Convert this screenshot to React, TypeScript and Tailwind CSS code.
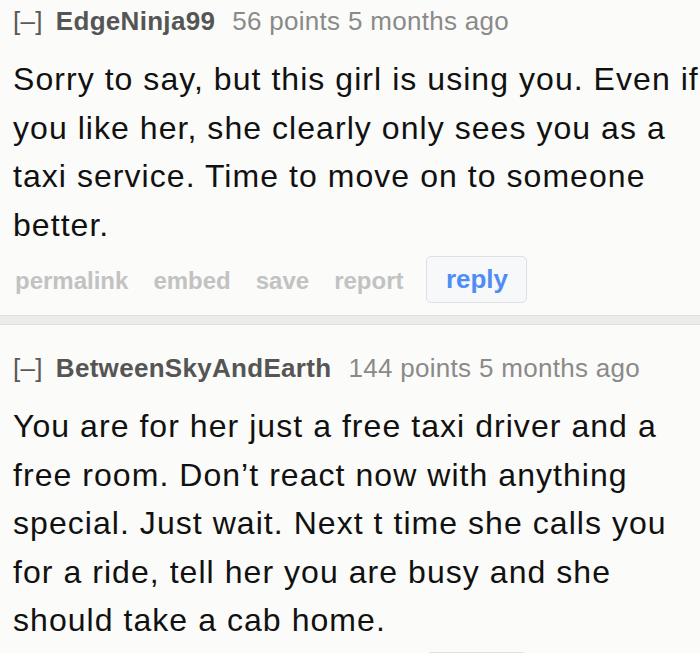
import React from 'react';

type Comment = {
  user: string;
  points: string;
  lines: string[];
};

const comments: Comment[] = [
  {
    user: 'EdgeNinja99',
    points: '56 points 5 months ago',
    lines: [
      'Sorry to say, but this girl is using you. Even if',
      'you like her, she clearly only sees you as a',
      'taxi service. Time to move on to someone',
      'better.',
    ],
  },
  {
    user: 'BetweenSkyAndEarth',
    points: '144 points 5 months ago',
    lines: [
      'You are for her just a free taxi driver and a',
      'free room. Don\u2019t react now with anything',
      'special. Just wait. Next t time she calls you',
      'for a ride, tell her you are busy and she',
      'should take a cab home.',
    ],
  },
];

function CommentBlock({ c }: { c: Comment }) {
  return (
    <div className="pl-[13px]">
      <div className="flex h-[40px] items-center whitespace-nowrap text-[26px] tracking-[0.3px]">
        <span className="text-[#5a5a5a]">[–]</span>
        <span className="ml-[13px] font-bold text-[#555555]">{c.user}</span>
        <span className="ml-[17px] text-[#8a8a8a]">{c.points}</span>
      </div>
      <p className="mt-[14px] whitespace-nowrap text-[32px] leading-[48.5px] tracking-[1.05px] text-[#111111]">
        {c.lines.map((l, i) => (
          <React.Fragment key={i}>
            {l}
            {i < c.lines.length - 1 && <br />}
          </React.Fragment>
        ))}
      </p>
      <div className="mt-[7px] flex items-center text-[24px] font-bold text-[#c2c2c2]">
        <span className="ml-[2px] pt-[3px]">permalink</span>
        <span className="ml-[25px] pt-[3px]">embed</span>
        <span className="ml-[25px] pt-[3px]">save</span>
        <span className="ml-[25px] pt-[3px]">report</span>
        <button className="ml-[23px] flex h-[47px] w-[101px] items-center justify-center rounded-[5px] border border-[#e0e0e0] bg-[#f7f8fa] text-[26px] font-bold text-[#4f8df5]">
          reply
        </button>
      </div>
    </div>
  );
}

export default function App() {
  return (
    <div
      className="h-[653px] w-[700px] overflow-hidden bg-[#fbfbf9]"
      style={{ fontFamily: '"Liberation Sans", Arial, sans-serif' }}
    >
      <div className="pt-[1px]">
        <CommentBlock c={comments[0]} />
      </div>
      <div className="mt-[12px] h-[10px] border-y border-[#e0e0e0] bg-[#ececec]" />
      <div className="pt-[23px]">
        <CommentBlock c={comments[1]} />
      </div>
    </div>
  );
}
